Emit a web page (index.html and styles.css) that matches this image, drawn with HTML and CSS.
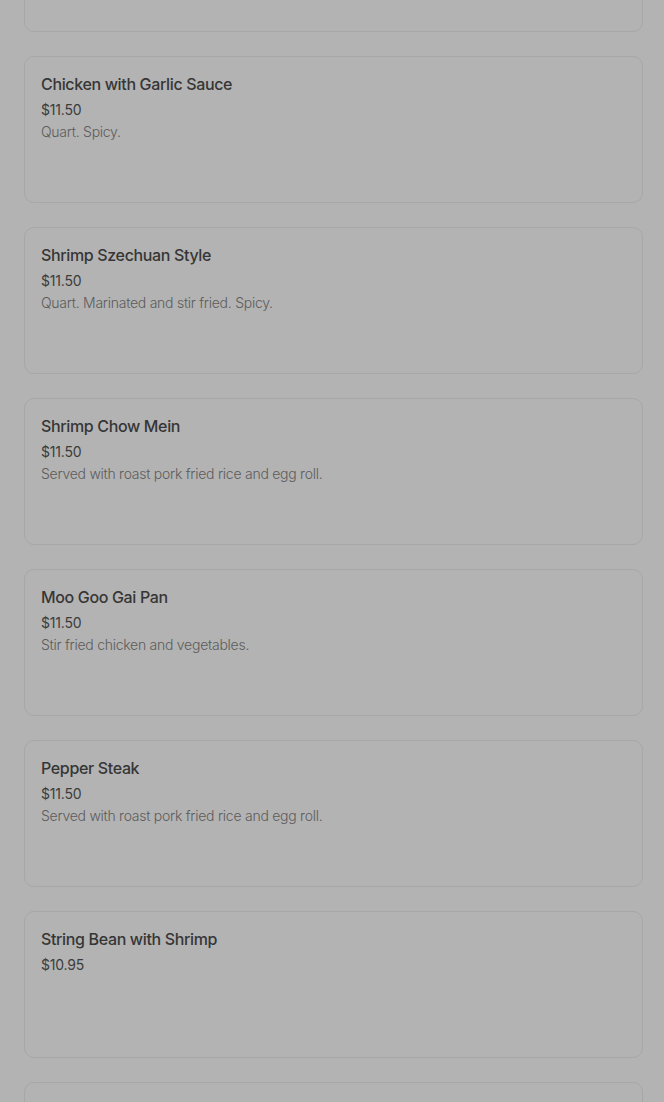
FILE: index.html
```html
<!DOCTYPE html>
<html lang="en">
<head>
<meta charset="utf-8">
<title>Menu</title>
<link rel="stylesheet" href="styles.css">
</head>
<body>
<div class="menu">
  <div class="card">
    <div class="title">Beef with Broccoli</div>
    <div class="price">$11.50</div>
    <div class="desc">Quart.</div>
  </div>
  <div class="card">
    <div class="title">Chicken with Garlic Sauce</div>
    <div class="price">$11.50</div>
    <div class="desc">Quart. Spicy.</div>
  </div>
  <div class="card">
    <div class="title">Shrimp Szechuan Style</div>
    <div class="price">$11.50</div>
    <div class="desc">Quart. Marinated and stir fried. Spicy.</div>
  </div>
  <div class="card">
    <div class="title">Shrimp Chow Mein</div>
    <div class="price">$11.50</div>
    <div class="desc">Served with roast pork fried rice and egg roll.</div>
  </div>
  <div class="card">
    <div class="title">Moo Goo Gai Pan</div>
    <div class="price">$11.50</div>
    <div class="desc">Stir fried chicken and vegetables.</div>
  </div>
  <div class="card">
    <div class="title">Pepper Steak</div>
    <div class="price">$11.50</div>
    <div class="desc">Served with roast pork fried rice and egg roll.</div>
  </div>
  <div class="card">
    <div class="title">String Bean with Shrimp</div>
    <div class="price">$10.95</div>
  </div>
  <div class="card">
    <div class="title">Sweet and Sour Chicken</div>
    <div class="price">$11.50</div>
  </div>
</div>
</body>
</html>
```
FILE: styles.css
```css
html, body {
  margin: 0;
  padding: 0;
  background: #b3b3b3;
  overflow: hidden;
}
body {
  font-family: Inter, "Noto Sans", sans-serif;
}
.menu {
  padding: 0 21px 0 24px;
  margin-top: -115px;
  display: flex;
  flex-direction: column;
  gap: 24px;
}
.card {
  box-sizing: border-box;
  height: 147px;
  border: 1px solid #a7a7a7;
  border-radius: 10px;
  padding: 16px 16px;
}
.title {
  font-size: 16px;
  line-height: 22px;
  font-weight: 500;
  color: #363636;
  margin-bottom: 4px;
  letter-spacing: -0.35px;
}
.price {
  font-size: 14px;
  line-height: 22px;
  color: #3c3c3c;
  font-weight: 400;
  letter-spacing: -0.2px;
}
.desc {
  font-size: 14px;
  line-height: 22px;
  color: #5c5c5c;
  font-weight: 300;
  letter-spacing: -0.26px;
}
```
